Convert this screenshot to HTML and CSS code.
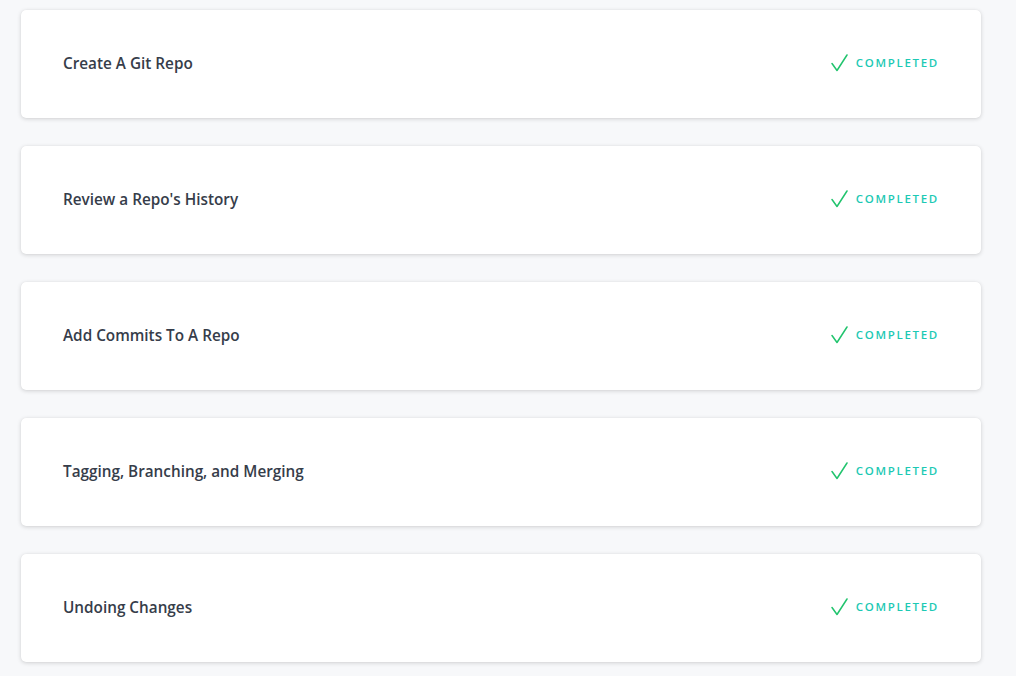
FILE: index.html
```html
<!DOCTYPE html>
<html>
<head>
<meta charset="utf-8">
<link rel="stylesheet" href="styles.css">
</head>
<body>
<div class="list">
  <div class="card"><span class="title">Create A Git Repo</span><span class="status"><svg class="check" viewBox="0 0 18 18" width="18" height="18"><path d="M2 9.5 L7 16.5 L17 1" fill="none" stroke="#22c46e" stroke-width="1.5" stroke-linecap="round" stroke-linejoin="round"/></svg><span class="label">COMPLETED</span></span></div>
  <div class="card"><span class="title">Review a Repo's History</span><span class="status"><svg class="check" viewBox="0 0 18 18" width="18" height="18"><path d="M2 9.5 L7 16.5 L17 1" fill="none" stroke="#22c46e" stroke-width="1.5" stroke-linecap="round" stroke-linejoin="round"/></svg><span class="label">COMPLETED</span></span></div>
  <div class="card"><span class="title">Add Commits To A Repo</span><span class="status"><svg class="check" viewBox="0 0 18 18" width="18" height="18"><path d="M2 9.5 L7 16.5 L17 1" fill="none" stroke="#22c46e" stroke-width="1.5" stroke-linecap="round" stroke-linejoin="round"/></svg><span class="label">COMPLETED</span></span></div>
  <div class="card"><span class="title">Tagging, Branching, and Merging</span><span class="status"><svg class="check" viewBox="0 0 18 18" width="18" height="18"><path d="M2 9.5 L7 16.5 L17 1" fill="none" stroke="#22c46e" stroke-width="1.5" stroke-linecap="round" stroke-linejoin="round"/></svg><span class="label">COMPLETED</span></span></div>
  <div class="card"><span class="title">Undoing Changes</span><span class="status"><svg class="check" viewBox="0 0 18 18" width="18" height="18"><path d="M2 9.5 L7 16.5 L17 1" fill="none" stroke="#22c46e" stroke-width="1.5" stroke-linecap="round" stroke-linejoin="round"/></svg><span class="label">COMPLETED</span></span></div>
</div>
</body>
</html>
```
FILE: styles.css
```css
html, body {
  margin: 0;
  padding: 0;
  background: #f7f8fa;
  font-family: "Open Sans", "Liberation Sans", sans-serif;
}
.list {
  display: flex;
  flex-direction: column;
  gap: 28px;
  padding: 10px 0 20px 21px;
  width: 960px;
}
.card {
  height: 108px;
  box-sizing: border-box;
  background: #fff;
  border-radius: 5px;
  box-shadow: 0 1px 4px rgba(0, 0, 0, 0.16), 0 0 1px rgba(0, 0, 0, 0.08);
  display: flex;
  align-items: center;
  justify-content: space-between;
  padding: 0 43px 0 42px;
}
.title {
  font-size: 15.3px;
  font-weight: 600;
  color: #363d4a;
  margin-top: -2px;
}
.status {
  display: flex;
  align-items: center;
  gap: 8px;
  margin-top: -4px;
}
.check {
  display: block;
  margin-top: 2px;
}
.label {
  font-size: 11.5px;
  font-weight: 600;
  letter-spacing: 1.7px;
  color: #1dc9b4;
  margin-right: -1px;
}
```
